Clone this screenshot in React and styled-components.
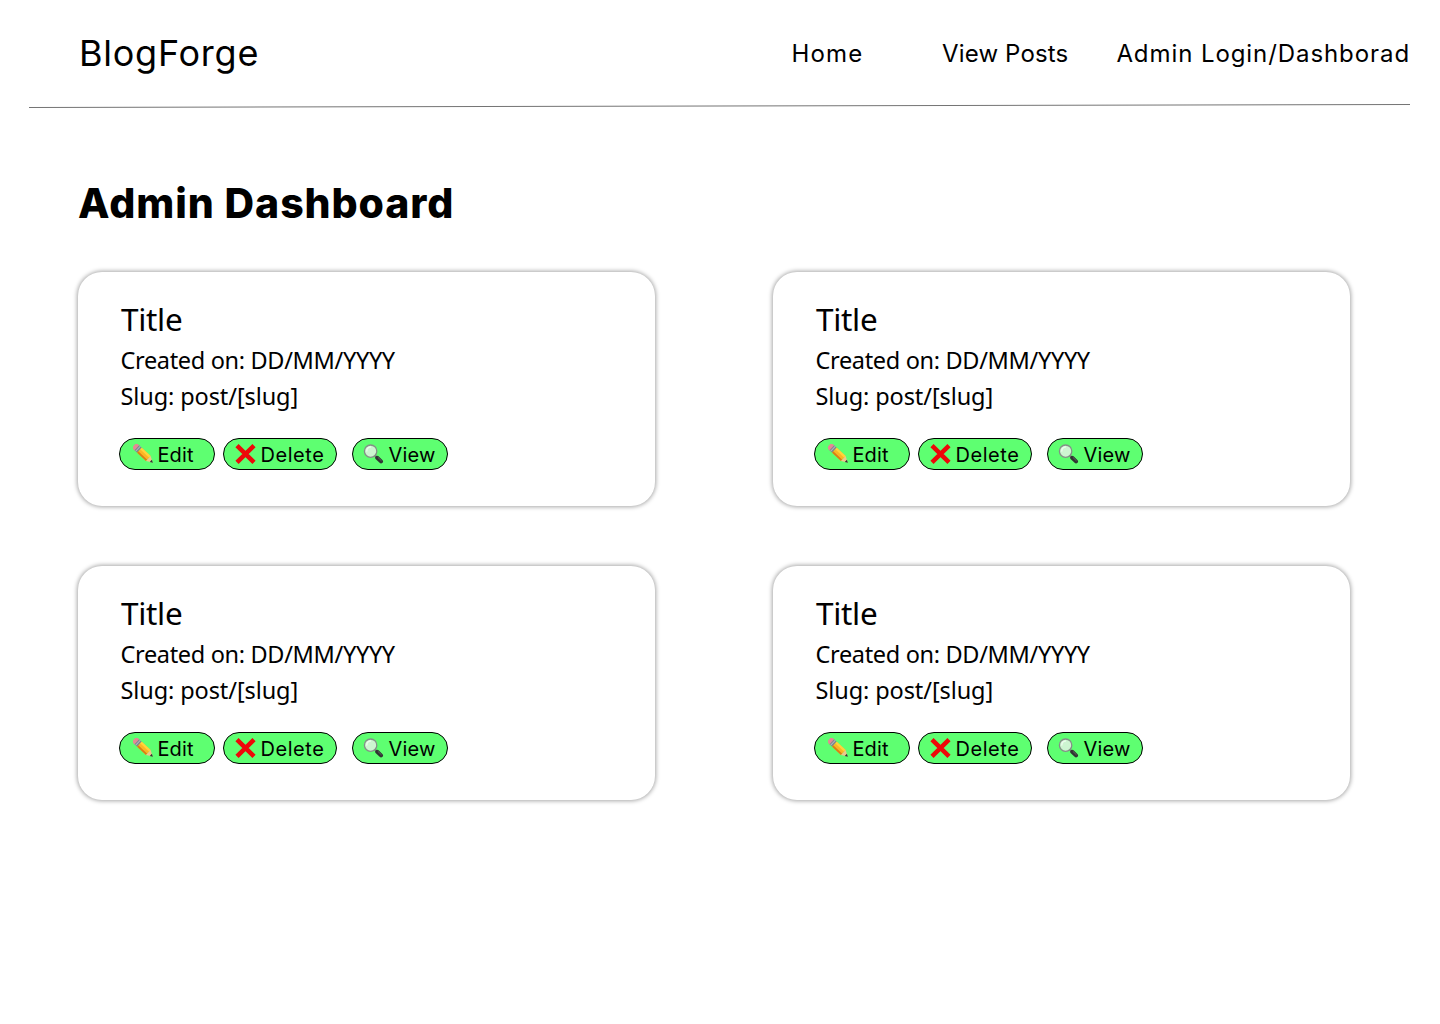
import React from "react";
import styled, { createGlobalStyle } from "styled-components";

const GlobalStyle = createGlobalStyle`
  * { box-sizing: border-box; }
  body { margin: 0; background: #fff; color: #000; }
`;

const Page = styled.div`
  width: 1440px;
  height: 1024px;
  overflow: hidden;
  font-family: Inter, "Liberation Sans", sans-serif;
`;

const Header = styled.header`
  display: flex;
  align-items: center;
  justify-content: space-between;
  height: 106px;
  padding: 0 30px 0 79px;
`;

const Brand = styled.span`
  font-size: 36px;
  line-height: 54px;
  letter-spacing: 0.75px;
  white-space: nowrap;
`;

const Nav = styled.nav`
  display: flex;
  padding-top: 1px;
`;

const NavLink = styled.a`
  font-size: 24px;
  line-height: 36px;
  white-space: nowrap;
  margin-left: ${(p) => p.$gap}px;
  letter-spacing: ${(p) => p.$spacing}px;
`;

const Rule = styled.svg`
  display: block;
  width: 1440px;
  height: 4px;
  margin-top: -2px;
`;

const Heading = styled.h1`
  margin: 65px 0 0 78px;
  font-size: 41px;
  line-height: 60px;
  font-weight: 800;
  letter-spacing: 0.92px;
  white-space: nowrap;
`;

const Grid = styled.main`
  display: grid;
  grid-template-columns: 577px 577px;
  gap: 60px 118px;
  padding: 39px 0 0 78px;
`;

const Card = styled.article`
  height: 234px;
  padding: 26px 41px;
  border-radius: 24px;
  background: #fff;
  box-shadow: 0 0 4px 1px rgba(0, 0, 0, 0.35);
  font-family: "Noto Sans", sans-serif;
`;

const Title = styled.h2`
  margin: 0 0 2px 2px;
  font-size: 31.5px;
  line-height: 42px;
  font-weight: 400;
  letter-spacing: -0.3px;
`;

const Detail = styled.p`
  margin: 0 0 0 1.5px;
  font-size: 23.5px;
  line-height: 36px;
  letter-spacing: ${(p) => p.$spacing}px;
  white-space: nowrap;
`;

const Actions = styled.div`
  display: flex;
  margin-top: 24px;
`;

const Button = styled.button`
  display: flex;
  align-items: center;
  width: ${(p) => p.$width}px;
  height: 32px;
  margin: 0 ${(p) => p.$after}px 0 0;
  padding: 0 0 0 ${(p) => p.$inset}px;
  gap: ${(p) => p.$gap}px;
  border: 1px solid #000;
  border-radius: 16px;
  background: #5eff71;
  color: #000;
  font-family: Inter, sans-serif;
  font-size: 20px;
  line-height: 30px;
  letter-spacing: ${(p) => p.$spacing}px;
  white-space: nowrap;
`;

const Label = styled.span`
  padding-top: 2px;
`;

const Icon = styled.svg`
  flex: none;
  width: 21px;
  height: 20px;
`;

const PencilIcon = () => (
  <Icon viewBox="0 0 21 20" aria-hidden="true">
    <g transform="translate(3.2 3.2) rotate(43)">
      <rect x="-2.8" y="-3.4" width="5" height="6.8" rx="1.8" fill="#e58a93" />
      <rect x="0.8" y="-3.4" width="3.6" height="6.8" fill="#80868f" />
      <rect x="2" y="-3.4" width="0.8" height="6.8" fill="#b9c0c6" />
      <path d="M4.4-3.4H16.6V3.4H4.4z" fill="#fbb524" />
      <path d="M4.4-3.4H16.6V-1.2H4.4z" fill="#ffd33c" />
      <path d="M4.4 1.6H16.6V3.4H4.4z" fill="#d67f17" />
      <path d="M16.6-3.4L22.4 0L16.6 3.4z" fill="#efc68c" />
      <path d="M20-1.5L22.8 0L20 1.5z" fill="#333" />
    </g>
  </Icon>
);

const CrossIcon = () => (
  <Icon viewBox="0 0 21 20" aria-hidden="true">
    <path d="M2 1.6L19 18.4M19 1.6L2 18.4" stroke="#ed0909" strokeWidth="4.5" />
  </Icon>
);

const LensIcon = () => (
  <Icon viewBox="0 0 21 20" aria-hidden="true">
    <path d="M11.8 11.5L15 14.6" stroke="#777" strokeWidth="2" />
    <path d="M14.2 13.8L18 17.4" stroke="#303332" strokeWidth="4" strokeLinecap="round" />
    <path d="M14.8 13.3L18.5 16.9" stroke="#6c706e" strokeWidth="0.8" />
    <circle cx="7.6" cy="7.2" r="6.2" fill="#cdf5d1" stroke="#858f88" strokeWidth="1.3" />
    <path d="M3.8 7A4 4 0 0 1 7.4 3" fill="none" stroke="#edfcee" strokeWidth="1.4" strokeLinecap="round" />
  </Icon>
);

const posts = [1, 2, 3, 4];

export default function App() {
  return (
    <Page>
      <GlobalStyle />
      <Header>
        <Brand>BlogForge</Brand>
        <Nav>
          <NavLink $gap={0} $spacing={1.2}>Home</NavLink>
          <NavLink $gap={78.5} $spacing={0.15}>View Posts</NavLink>
          <NavLink $gap={48} $spacing={0.92}>Admin Login/Dashborad</NavLink>
        </Nav>
      </Header>
      <Rule viewBox="0 0 1440 4" aria-hidden="true">
        <path d="M29 3.5L1410 0.5" stroke="#000" strokeOpacity="0.55" strokeWidth="1" />
      </Rule>
      <Heading>Admin Dashboard</Heading>
      <Grid>
        {posts.map((id) => (
          <Card key={id}>
            <Title>Title</Title>
            <Detail $spacing={-0.33}>Created on: DD/MM/YYYY</Detail>
            <Detail $spacing={-0.1}>Slug: post/[slug]</Detail>
            <Actions>
              <Button $width={96} $after={8} $inset={12.5} $gap={4} $spacing={0.1}>
                <PencilIcon />
                <Label>Edit</Label>
              </Button>
              <Button $width={114} $after={15} $inset={11} $gap={4.5} $spacing={0.55}>
                <CrossIcon />
                <Label>Delete</Label>
              </Button>
              <Button $width={96} $after={0} $inset={9.5} $gap={5} $spacing={0.2}>
                <LensIcon />
                <Label>View</Label>
              </Button>
            </Actions>
          </Card>
        ))}
      </Grid>
    </Page>
  );
}
